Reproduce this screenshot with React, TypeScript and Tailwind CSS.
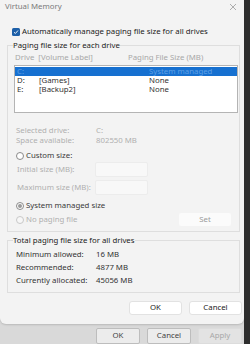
import React from 'react';

const drives = [
  { letter: 'C:', label: '', size: 'System managed', selected: true },
  { letter: 'D:', label: '[Games]', size: 'None', selected: false },
  { letter: 'E:', label: '[Backup2]', size: 'None', selected: false },
];

const totals = [
  { label: 'Minimum allowed:', value: '16 MB' },
  { label: 'Recommended:', value: '4877 MB' },
  { label: 'Currently allocated:', value: '45056 MB' },
];

function Radio({ checked, disabled }: { checked?: boolean; disabled?: boolean }) {
  return (
    <span
      className={`flex h-[8px] w-[8px] shrink-0 items-center justify-center rounded-full border ${
        disabled ? 'border-[#c8c8c8] bg-[#f7f7f7]' : 'border-[#8a8a8a] bg-white'
      }`}
    >
      {checked && <span className="h-[4px] w-[4px] rounded-full bg-[#9a9a9a]" />}
    </span>
  );
}

export default function App() {
  return (
    <div className="flex h-[344px] w-[250px] overflow-hidden whitespace-nowrap bg-[#d9d9d9] font-['Noto_Sans',sans-serif] text-[7.8px] leading-none text-[#1b1b1b]">
      <div className="flex w-[244px] flex-col">
        {/* Dialog */}
        <div className="flex h-[325px] flex-col rounded-b-[6px] bg-[#f3f3f3] shadow-[0_1px_2px_rgba(0,0,0,0.15)]">
          {/* Title bar */}
          <div className="flex h-[14px] items-center justify-between pl-[5px] pr-[7px] text-[#7a7a7a]">
            <span>Virtual Memory</span>
            <svg width="8" height="8" viewBox="0 0 8 8" className="text-[#9a9a9a]">
              <path d="M1 1L7 7M7 1L1 7" stroke="currentColor" strokeWidth="0.8" />
            </svg>
          </div>

          {/* Auto manage checkbox */}
          <div className="mt-[12px] flex h-[12px] items-center pl-[12px]">
            <span className="flex h-[8px] w-[8px] items-center justify-center rounded-[1.5px] bg-[#1d5fa8]">
              <svg width="6" height="6" viewBox="0 0 6 6">
                <path d="M1 3.2L2.4 4.5L5 1.5" stroke="white" strokeWidth="0.9" fill="none" />
              </svg>
            </span>
            <span className="ml-[2px]">Automatically manage paging file size for all drives</span>
          </div>

          {/* Paging file size for each drive */}
          <fieldset className="mt-[2px] ml-[7px] w-[233px] border border-[#dedede] pb-[5px]">
            <legend className="ml-[5px] h-[10px] leading-[10px]">Paging file size for each drive</legend>
            <div className="mt-[3px] flex h-[10px] items-center text-[#a8a8a8]">
              <span className="w-[120px] pl-[7px]">Drive&nbsp; [Volume Label]</span>
              <span>Paging File Size (MB)</span>
            </div>
            <div className="mt-[2px] ml-[6px] h-[48px] w-[224px] border border-[#b4b4b4] bg-white pt-[1px]">
              {drives.map((d) => (
                <div
                  key={d.letter}
                  className={`flex h-[9px] items-center leading-[9px] ${
                    d.selected ? 'bg-[#1670d0] text-[#5fa0e6]' : 'text-[#333333]'
                  }`}
                >
                  <span className="w-[24px] pl-[2px]">{d.letter}</span>
                  <span className="w-[110px]">{d.label}</span>
                  <span>{d.size}</span>
                </div>
              ))}
            </div>

            <div className="mt-[13px] flex h-[10px] items-center text-[#b0b0b0]">
              <span className="w-[88px] pl-[8px]">Selected drive:</span>
              <span>C:</span>
            </div>
            <div className="flex h-[10px] items-center text-[#b0b0b0]">
              <span className="w-[88px] pl-[8px]">Space available:</span>
              <span>802550 MB</span>
            </div>

            <div className="mt-[4px] flex h-[12px] items-center gap-[2px] pl-[8px] text-[#3a3a3a]">
              <Radio />
              <span>Custom size:</span>
            </div>
            <div className="flex h-[15px] items-center text-[#b0b0b0]">
              <span className="w-[87px] pl-[9px]">Initial size (MB):</span>
              <span className="h-[15px] w-[53px] rounded-[2px] border border-[#ececec] bg-[#f8f8f8]" />
            </div>
            <div className="mt-[3px] flex h-[15px] items-center text-[#b0b0b0]">
              <span className="w-[87px] pl-[9px]">Maximum size (MB):</span>
              <span className="h-[15px] w-[53px] rounded-[2px] border border-[#ececec] bg-[#f8f8f8]" />
            </div>

            <div className="mt-[5px] flex h-[12px] items-center gap-[2px] pl-[8px] text-[#3a3a3a]">
              <Radio checked />
              <span>System managed size</span>
            </div>
            <div className="mt-[1px] flex h-[13px] items-center pl-[8px] pr-[8px] text-[#b0b0b0]">
              <Radio disabled />
              <span className="ml-[2px] flex-1">No paging file</span>
              <span className="flex h-[13px] w-[52px] items-center justify-center rounded-[2px] bg-[#fbfbfb] text-[#9a9a9a]">
                Set
              </span>
            </div>
          </fieldset>

          {/* Totals */}
          <fieldset className="mt-[3px] ml-[7px] w-[233px] border border-[#dedede] pb-[5px]">
            <legend className="ml-[5px] h-[10px] leading-[10px]">Total paging file size for all drives</legend>
            <div className="mt-[3px]">
              {totals.map((t) => (
                <div key={t.label} className="flex h-[13px] items-center text-[#333333]">
                  <span className="w-[88px] pl-[8px]">{t.label}</span>
                  <span>{t.value}</span>
                </div>
              ))}
            </div>
          </fieldset>

          {/* Dialog buttons */}
          <div className="mt-[8px] flex justify-end gap-[7px] pr-[2px]">
            <button className="h-[14px] w-[53px] rounded-[3px] border border-[#e2e2e2] bg-white">OK</button>
            <button className="h-[14px] w-[53px] rounded-[3px] border border-[#e2e2e2] bg-white">Cancel</button>
          </div>
        </div>

        {/* Parent window buttons */}
        <div className="mt-[4px] flex justify-end gap-[7px] pr-[2px] text-[#444444]">
          <button className="h-[16px] w-[44px] rounded-[2px] border border-[#bdbdbd] bg-[#ececec]">OK</button>
          <button className="h-[16px] w-[44px] rounded-[2px] border border-[#bdbdbd] bg-[#ececec]">Cancel</button>
          <button className="h-[16px] w-[44px] rounded-[2px] border border-[#dcdcdc] bg-[#e3e3e3] text-[#a8a8a8]">
            Apply
          </button>
        </div>
      </div>
      <div className="flex-1 bg-[#2e2e2e]" />
    </div>
  );
}
